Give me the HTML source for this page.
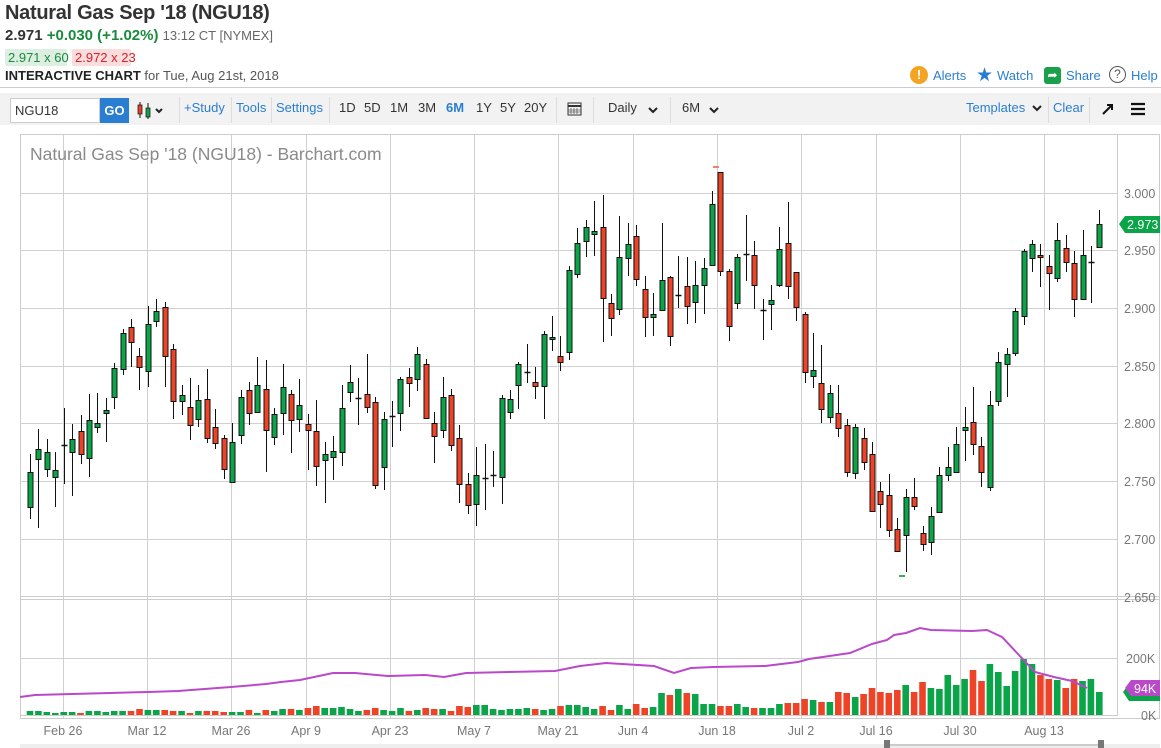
<!DOCTYPE html>
<html><head><meta charset="utf-8"><style>
*{margin:0;padding:0;box-sizing:border-box}
body{width:1161px;height:748px;overflow:hidden;background:#fff;font-family:"Liberation Sans",sans-serif;color:#333;position:relative}
.a{position:absolute;white-space:nowrap}
.blue{color:#2a7ed2}
.tb{font-size:13px;top:100px}
</style></head><body>
<div class="a" style="left:5px;top:2px;font-size:20px;font-weight:bold;color:#333;letter-spacing:-0.3px">Natural Gas Sep '18 (NGU18)</div>
<div class="a" style="left:5px;top:27px;font-size:15px"><b>2.971</b> <b style="color:#1a8a3c">+0.030 (+1.02%)</b> <span style="font-size:13px;color:#666">13:12 CT [NYMEX]</span></div>
<div class="a" style="left:5px;top:49px;height:17px;width:62px;background:#dcefe2;color:#1a8a3c;font-size:13px;padding:1px 3px;border-radius:2px">2.971 x 60</div>
<div class="a" style="left:72px;top:49px;height:17px;width:59px;background:#f9dcdc;color:#d8202a;font-size:13px;padding:1px 3px;border-radius:2px">2.972 x 23</div>
<div class="a" style="left:5px;top:68px;font-size:13px;color:#555"><b style="color:#222">INTERACTIVE CHART</b> for Tue, Aug 21st, 2018</div>
<div class="a" style="left:910px;top:66px;width:18px;height:18px;border-radius:50%;background:#f4a422;color:#fff;font-size:13px;font-weight:bold;text-align:center;line-height:18px">!</div>
<div class="a blue" style="left:933px;top:68px;font-size:13px">Alerts</div>
<div class="a" style="left:976px;top:64px;font-size:19px;color:#2a7ed2">★</div>
<div class="a blue" style="left:997px;top:68px;font-size:13px">Watch</div>
<div class="a" style="left:1044px;top:67px;width:17px;height:17px;border-radius:3px;background:#1aa04a;color:#fff;font-size:12px;text-align:center;line-height:17px">➦</div>
<div class="a blue" style="left:1066px;top:68px;font-size:13px">Share</div>
<div class="a" style="left:1109px;top:66px;width:17px;height:17px;border-radius:50%;border:1.5px solid #555;color:#555;font-size:12px;text-align:center;line-height:14px">?</div>
<div class="a blue" style="left:1131px;top:68px;font-size:13px">Help</div>
<div class="a" style="left:0;top:87px;width:1161px;height:1px;background:#ccc"></div>
<div class="a" style="left:0;top:93px;width:1161px;height:32px;background:#f2f2f2"></div>
<div class="a" style="left:10px;top:98px;width:90px;height:25px;background:#fff;border:1px solid #ccc;font-size:13px;padding:4px 4px">NGU18</div>
<div class="a" style="left:100px;top:98px;width:29px;height:25px;background:#2a7ed2;color:#fff;font-size:13px;font-weight:bold;text-align:center;line-height:25px">GO</div>
<svg class="a" style="left:136px;top:100px" width="32" height="20"><line x1="4" y1="2" x2="4" y2="18" stroke="#111"/><rect x="2" y="5" width="4" height="9" fill="#e8402a" stroke="#111" stroke-width=".7"/><line x1="12" y1="3" x2="12" y2="19" stroke="#111"/><rect x="10" y="8" width="4" height="9" fill="#1aa04a" stroke="#111" stroke-width=".7"/><path d="M20 9l3 3 3-3" stroke="#222" stroke-width="2" fill="none"/></svg>
<div class="a" style="left:179px;top:97px;width:1px;height:26px;background:#ddd"></div>
<div class="a tb blue" style="left:184px">+Study</div>
<div class="a" style="left:231px;top:97px;width:1px;height:26px;background:#ddd"></div>
<div class="a tb blue" style="left:236px">Tools</div>
<div class="a" style="left:271px;top:97px;width:1px;height:26px;background:#ddd"></div>
<div class="a tb blue" style="left:276px">Settings</div>
<div class="a" style="left:329px;top:97px;width:1px;height:26px;background:#ddd"></div>
<div class="a tb" style="left:339px">1D</div><div class="a tb" style="left:364px">5D</div><div class="a tb" style="left:390px">1M</div><div class="a tb" style="left:418px">3M</div><div class="a tb blue" style="left:446px;font-weight:bold">6M</div><div class="a tb" style="left:476px">1Y</div><div class="a tb" style="left:500px">5Y</div><div class="a tb" style="left:524px">20Y</div>
<div class="a" style="left:556px;top:97px;width:1px;height:26px;background:#ddd"></div>
<svg class="a" style="left:567px;top:101px" width="15" height="15"><rect x="1" y="2" width="13" height="12" fill="none" stroke="#333"/><line x1="1" y1="5" x2="14" y2="5" stroke="#333" stroke-width="2"/><path d="M4 7v6M7 7v6M10 7v6M1 9h13M1 11h13" stroke="#333" stroke-width=".6"/></svg>
<div class="a" style="left:593px;top:97px;width:1px;height:26px;background:#ddd"></div>
<div class="a tb" style="left:608px">Daily</div>
<svg class="a" style="left:647px;top:106px" width="12" height="8"><path d="M2 2l4 4 4-4" stroke="#222" stroke-width="2" fill="none"/></svg>
<div class="a" style="left:670px;top:97px;width:1px;height:26px;background:#ddd"></div>
<div class="a tb" style="left:682px">6M</div>
<svg class="a" style="left:708px;top:106px" width="12" height="8"><path d="M2 2l4 4 4-4" stroke="#222" stroke-width="2" fill="none"/></svg>
<div class="a tb blue" style="left:966px">Templates</div>
<svg class="a" style="left:1031px;top:104px" width="12" height="8"><path d="M2 2l4 4 4-4" stroke="#222" stroke-width="2" fill="none"/></svg>
<div class="a" style="left:1048px;top:97px;width:1px;height:26px;background:#ddd"></div>
<div class="a tb blue" style="left:1053px">Clear</div>
<div class="a" style="left:1089px;top:97px;width:1px;height:26px;background:#ddd"></div>
<svg class="a" style="left:1100px;top:101px" width="16" height="16"><path d="M3 13L12 4M7 4h5v5" stroke="#111" stroke-width="2" fill="none"/></svg>
<svg class="a" style="left:1130px;top:101px" width="16" height="16"><path d="M1 3h14M1 8h14M1 13h14" stroke="#111" stroke-width="2.2"/></svg>
<svg id="ch" class="a" style="left:0;top:0" width="1161" height="748"></svg>
<script>
var C=[
['g',472,507,454,519],['g',449,459,429,528],['g',452,469,439,477],['g',470,477,452,507],['d',445,445,408,484],['g',439,452,424,496],['r',431,454,415,464],['g',420,458,394,477],['g',423,427,393,433],['g',410,413,398,442],['g',368,397,363,409],['g',333,369,329,375],['r',327,342,319,367],['r',356,367,348,390],['g',324,371,306,387],['g',311,321,299,327],['r',307,356,302,387],['r',349,401,344,419],['g',395,401,385,415],['r',407,425,378,440],['g',400,419,385,427],['r',399,438,369,443],['r',427,443,409,449],['r',438,469,435,479],['g',442,482,423,483],['g',397,435,390,444],['r',390,413,382,425],['g',385,412,357,413],['r',389,430,360,472],['g',414,437,408,445],['g',387,413,364,435],['r',394,420,390,453],['g',405,419,379,432],['r',424,430,414,470],
['r',431,466,400,486],['g',454,460,442,503],['g',451,457,436,480],['g',408,452,385,466],['g',382,392,365,402],['d',398,398,378,425],['r',394,407,354,413],['r',402,485,397,489],['g',419,467,412,490],['d',416,416,401,447],['g',379,413,377,431],['r',377,383,368,407],['g',354,379,347,391],['r',364,418,359,419],['r',423,436,412,463],['g',397,430,377,438],['r',395,445,389,451],['r',438,484,425,503],['r',484,505,473,514],['g',475,504,447,526],['d',478,478,444,510],['d',475,475,451,487],['g',398,477,395,504],['g',399,412,390,419],['g',364,385,362,409],['d',372,372,344,383],['r',382,386,367,399],['g',334,386,331,419],['g',337,339,316,351],['r',356,362,336,371],['g',270,352,266,360],['g',243,274,228,278],['g',227,241,220,257],
['g',231,234,201,256],['r',227,298,195,342],['r',303,318,294,336],['g',257,309,216,315],['g',244,258,223,276],['r',236,279,225,286],['r',289,317,276,337],['g',314,317,293,336],['g',280,310,223,310],['r',277,336,276,346],['d',295,295,256,308],['r',286,306,257,324],['g',285,302,261,323],['g',268,285,258,314],['g',204,265,191,265],['r',172,271,172,276],['r',271,326,269,341],['g',257,303,254,309],['d',254,254,215,281],['r',255,285,241,309],['d',310,310,299,340],['g',300,304,285,330],['g',249,285,227,287],['r',243,286,202,299],['r',272,307,272,321],['r',314,372,312,383],['g',370,376,333,388],['r',383,409,345,423],['g',393,417,385,423],['r',413,428,385,437],['r',425,472,419,477],['g',427,473,424,479],['r',438,462,428,470],
['r',454,511,442,511],['r',491,504,482,528],['r',495,530,474,537],['r',529,551,518,551],['g',497,535,489,572],['r',497,506,478,510],['r',533,544,526,551],['g',516,542,507,555],['g',475,512,467,513],['g',467,475,447,481],['g',444,472,427,472],['g',427,430,407,461],['r',422,444,387,455],['r',446,472,437,487],['g',405,487,391,491],['g',362,401,352,406],['g',354,364,348,397],['g',311,353,308,356],['g',251,316,249,325],['g',244,258,240,272],['r',255,257,244,287],['r',266,273,255,310],['g',240,278,223,282],['r',248,262,235,272],['r',263,299,251,317],['g',255,299,230,299],['d',262,262,246,303],['g',224,247,210,247]];
var V1=[4,4,3,2,3,3,2,4,4,3,4,4,4,6,5,5,5,4,4,2,4,4,4,3,3,3,5,2,5,4,6,6,5,7,9,7,7,8,6,4,5,7,5,4,7,4,5,7,6,6,4,9,8,10,10,6,5,6,6,7,6,5,6,9,10,10];
var V2=[8,6,9,5,10,6,11,7,8,22,20,26,22,21,11,11,9,9,11,8,7,7,7,11,12,12,16,15,13,13,23,22,18,21,27,23,22,25,30,23,33,27,26,40,30,36,45,34,51,43,29,44,56,51,40,36,35,27,36,34,36,23];
var V=V1.concat(V2);
var s='';
function L(x1,y1,x2,y2,c,w){s+='<line x1="'+x1+'" y1="'+y1+'" x2="'+x2+'" y2="'+y2+'" stroke="'+c+'" stroke-width="'+(w||1)+'"/>';}
function T(x,y,t,c,sz,a){s+='<text x="'+x+'" y="'+y+'" fill="'+c+'" font-size="'+sz+'" font-family="Liberation Sans,sans-serif"'+(a?' text-anchor="'+a+'"':'')+'>'+t+'</text>';}
s+='<rect x="20.5" y="134.5" width="1139" height="584" fill="none" stroke="#ccc"/>';
var px=[63,147,231,306,390,474,558,633,717,801,876,960,1044];
px.forEach(function(x){L(x+.5,135,x+.5,718,'#d0d0d0');});
var py=[193,250,308,366,423,481,539];
py.forEach(function(y){L(20,y+.5,1117,y+.5,'#d0d0d0');});
L(20,596.5,1160,596.5,'#ccc');L(20,599.5,1160,599.5,'#ccc');
L(20,658.5,1117,658.5,'#d0d0d0');L(20,715.5,1117,715.5,'#ccc');
L(1117.5,135,1117.5,716,'#ccc');
var pl=['3.000','2.950','2.900','2.850','2.800','2.750','2.700'];
py.forEach(function(y,i){T(1124,y+5,pl[i],'#777',12.5);});
T(1124,602,'2.650','#777',12.5);T(1126,663,'200K','#777',12.5);T(1141,720,'0K','#777',12.5);
T(30,160,"Natural Gas Sep '18 (NGU18) - Barchart.com",'#8a8a8a',17.5);
var dl=['Feb 26','Mar 12','Mar 26','Apr 9','Apr 23','May 7','May 21','Jun 4','Jun 18','Jul 2','Jul 16','Jul 30','Aug 13'];
px.forEach(function(x,i){T(x,735,dl[i],'#777',12.5,'middle');});
var G='#0aa548',R='#ee4327';
for(var i=0;i<C.length;i++){var x=30+i*8.42;var c=C[i][0]=='r'?R:G;var h=V[i]||4;s+='<rect x="'+(x-3.3).toFixed(1)+'" y="'+(715-h)+'" width="6.6" height="'+h+'" fill="'+c+'"/>';}
var M=[[20,697],[35,695],[148,692],[178,691],[231,687],[266,684],[281,682],[300,680],[333,673],[355,673],[388,676],[425,675],[444,677],[466,673],[555,671],[580,666],[606,663],[654,666],[674,673],[691,668],[713,667],[765,666],[798,662],[809,659],[850,653],[872,644],[887,640],[894,635],[906,633],[920,628],[931,630],[972,631],[987,630],[1002,637],[1017,653],[1035,672],[1054,677],[1072,681],[1087,688]];
s+='<polyline fill="none" stroke="#b949c9" stroke-width="2" points="'+M.map(function(p){return p.join(',')}).join(' ')+'"/>';
for(var i=0;i<C.length;i++){var d=C[i],x=Math.round(30+i*8.42)+.5;L(x,d[3],x,d[4],'#111');
 if(d[0]=='d'){L(x-3,d[1]+.5,x+3,d[1]+.5,'#111',1.5);}else{var h=Math.max(d[2]-d[1],2);s+='<rect x="'+(x-2.5)+'" y="'+(d[1]+.5)+'" width="5" height="'+h+'" fill="'+(d[0]=='r'?R:G)+'" stroke="#111" stroke-width="1"/>';}}
s+='<rect x="713" y="166" width="6" height="2" fill="#f08070"/><rect x="899" y="575" width="6" height="2" fill="#30b060"/>';
s+='<path d="M1119 224l6-8h35v17h-35z" fill="#0aa548"/>';T(1127,229,'2.973','#fff',12.5);
s+='<path d="M1123 692l6-8h31v17h-31z" fill="#0aa548"/><path d="M1125 688l6-8h29v16h-29z" fill="#b949c9"/>';T(1134,693,'94K','#fff',12.5);
s+='<rect x="20" y="744" width="1140" height="4" fill="#eee"/><line x1="887" y1="745" x2="1100" y2="745" stroke="#aaa"/><rect x="884" y="740" width="6" height="8" fill="#777"/><rect x="1098" y="740" width="6" height="8" fill="#777"/>';
document.getElementById('ch').innerHTML=s;
</script>
</body></html>
